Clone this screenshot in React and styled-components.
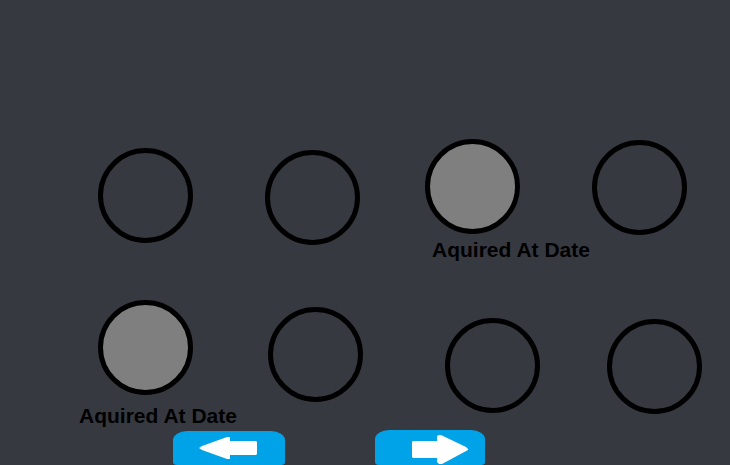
import React from "react";
import styled, { createGlobalStyle } from "styled-components";

const GlobalStyle = createGlobalStyle`
  *, *::before, *::after { box-sizing: border-box; }
  body {
    margin: 0;
    background: #373941;
    color: #000;
    font-family: "Liberation Sans", Arial, sans-serif;
  }
`;

const Page = styled.main`
  display: flex;
  flex-direction: column;
  min-height: 100vh;
  padding-top: 139px;
  overflow: hidden;
`;

const Badges = styled.section`
  display: flex;
  flex-direction: column;
  gap: 38px;
`;

const BadgeRow = styled.div`
  display: flex;
  align-items: flex-start;
`;

const Spacer = styled.div`
  flex: ${(p) => p.$grow} 1 0;
`;

const Badge = styled.figure`
  flex: none;
  width: 95px;
  margin: ${(p) => p.$drop}px 0 0;
`;

const Disc = styled.div`
  width: 95px;
  height: 95px;
  border: 5px solid #000;
  border-radius: 50%;
  background: ${(p) => (p.$filled ? "#7f7f7f" : "transparent")};
`;

const Caption = styled.figcaption`
  margin: ${(p) => p.$gap}px 0 0 ${(p) => p.$shift}px;
  font-size: 21px;
  font-weight: 700;
  line-height: 24px;
  white-space: nowrap;
`;

const Pager = styled.nav`
  display: flex;
  align-items: flex-end;
  margin-top: auto;
`;

const PagerButton = styled.button`
  flex: none;
  width: ${(p) => p.$width}px;
  height: ${(p) => p.$height}px;
  padding: 0;
  border: 0;
  border-radius: 14px 14px 4px 4px / 9px 9px 3px 3px;
  background: #00a2e8;
  color: #fff;
  cursor: pointer;
`;

const Arrow = styled.svg`
  display: block;
  width: 100%;
  height: 100%;
  fill: currentColor;
`;

const rows = [
  {
    id: "first",
    end: 43,
    badges: [
      { before: 98, drop: 9 },
      { before: 72, drop: 11 },
      { before: 65, drop: 0, label: "Aquired At Date", gap: 4, shift: 7 },
      { before: 72, drop: 1 },
    ],
  },
  {
    id: "second",
    end: 28,
    badges: [
      { before: 98, drop: 0, label: "Aquired At Date", gap: 9, shift: -19 },
      { before: 75, drop: 7 },
      { before: 82, drop: 18 },
      { before: 67, drop: 19 },
    ],
  },
];

export default function App() {
  return (
    <>
      <GlobalStyle />
      <Page>
        <Badges>
          {rows.map((row) => (
            <BadgeRow key={row.id}>
              {row.badges.map((badge, i) => (
                <React.Fragment key={i}>
                  <Spacer $grow={badge.before} />
                  <Badge $drop={badge.drop}>
                    <Disc $filled={Boolean(badge.label)} />
                    {badge.label && (
                      <Caption $gap={badge.gap} $shift={badge.shift}>
                        {badge.label}
                      </Caption>
                    )}
                  </Badge>
                </React.Fragment>
              ))}
              <Spacer $grow={row.end} />
            </BadgeRow>
          ))}
        </Badges>
        <Pager aria-label="Pages">
          <Spacer $grow={173} />
          <PagerButton type="button" aria-label="Previous" $width={112} $height={34}>
            <Arrow viewBox="0 0 112 34" aria-hidden="true">
              <path d="M26 17 L29 15 L54 6 H57 V10 H83 L84 11 V23 L83 24 H57 V28 H54 L29 19 Z" />
            </Arrow>
          </PagerButton>
          <Spacer $grow={90} />
          <PagerButton type="button" aria-label="Next" $width={110} $height={35}>
            <Arrow viewBox="0 0 110 35" aria-hidden="true">
              <path d="M37 12 L38 11 H62 V6 L64 5 H66 L91 17 L93 19 V20 L67 34 H64 L62 32 V28 H38 L37 27 Z" />
            </Arrow>
          </PagerButton>
          <Spacer $grow={245} />
        </Pager>
      </Page>
    </>
  );
}
